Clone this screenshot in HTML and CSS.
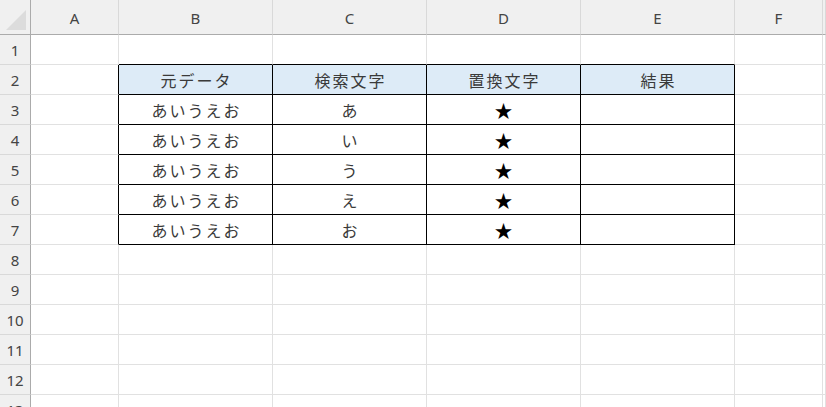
FILE: index.html
```html
<!DOCTYPE html>
<html lang="ja">
<head>
    <meta charset="UTF-8">
    <meta name="viewport" content="width=device-width, initial-scale=1.0">
    <title>置換</title>
    <link rel="stylesheet" href="styles.css">
</head>
<body>
    <div class="sheet" id="sheet"></div>
    <script>
        document.addEventListener('DOMContentLoaded', function() {
            const sheet = document.getElementById('sheet');
            const columns = ['A', 'B', 'C', 'D', 'E', 'F', ''];
            const data = {
                2: ['元データ', '検索文字', '置換文字', '結果'],
                3: ['あいうえお', 'あ', '★', ''],
                4: ['あいうえお', 'い', '★', ''],
                5: ['あいうえお', 'う', '★', ''],
                6: ['あいうえお', 'え', '★', ''],
                7: ['あいうえお', 'お', '★', '']
            };

            function addCell(className, text) {
                const cell = document.createElement('div');
                cell.className = className;
                cell.textContent = text || '';
                sheet.appendChild(cell);
                return cell;
            }

            // column headers
            const corner = addCell('corner');
            corner.innerHTML = '<span class="corner-mark"></span>';
            columns.forEach(col => addCell('col-head', col));

            for (let row = 1; row <= 13; row++) {
                addCell('row-head', row);
                columns.forEach((col, i) => {
                    let className = 'cell';
                    let text = '';
                    const inTable = data[row] && i >= 1 && i <= 4;
                    if (inTable) {
                        className += ' boxed';
                        text = data[row][i - 1];
                        if (row === 2) className += ' title';
                        if (text === '★') className += ' star';
                    }
                    if (data[row] && i === 0) className += ' edge-right';
                    if (row === 1 && i >= 1 && i <= 4) className += ' edge-bottom';
                    addCell(className, text);
                });
            }
        });
    </script>
</body>
</html>
```

FILE: styles.css
```css
body {
    margin: 0;
    padding: 0;
    background-color: #fff;
    overflow: hidden;
    font-family: "Noto Sans CJK JP", "Noto Sans", sans-serif;
}
.sheet {
    display: grid;
    grid-template-columns: 31px 88px 154px 154px 154px 154px 88px 1fr;
    grid-template-rows: 35px repeat(13, 30px);
    width: 826px;
}
.corner,
.col-head,
.row-head,
.cell {
    box-sizing: border-box;
    display: flex;
    justify-content: center;
    align-items: center;
}
.corner {
    background-color: #f0f0f0;
    border-right: 1px solid #ababab;
    border-bottom: 1px solid #ababab;
    align-items: flex-end;
    justify-content: flex-end;
    padding: 0 4px 4px 0;
}
.corner-mark {
    width: 20px;
    height: 20px;
    background-color: #dcdcdc;
    clip-path: polygon(100% 0, 100% 100%, 0 100%);
}
.col-head {
    background-color: #f0f0f0;
    border-right: 1px solid #d9d9d9;
    border-bottom: 1px solid #ababab;
    font-family: "Noto Sans", sans-serif;
    font-size: 15px;
    color: #444;
    padding-top: 2px;
}
.row-head {
    background-color: #f0f0f0;
    border-right: 1px solid #ababab;
    border-bottom: 1px solid #d9d9d9;
    font-family: "Noto Sans", sans-serif;
    font-size: 15px;
    color: #444;
}
.cell {
    border-right: 1px solid #e1e1e1;
    border-bottom: 1px solid #e1e1e1;
    font-size: 16px;
    letter-spacing: 2px;
    padding-left: 2px;
    color: #3a3a3a;
}
.cell.boxed {
    border-right-color: #000;
    border-bottom-color: #000;
}
.cell.title {
    background-color: #ddebf7;
}
.cell.edge-right {
    border-right-color: #000;
}
.cell.edge-bottom {
    border-bottom-color: #000;
}
.cell.star {
    color: #000;
    font-size: 18px;
    letter-spacing: 0;
    padding-left: 0;
}
```
